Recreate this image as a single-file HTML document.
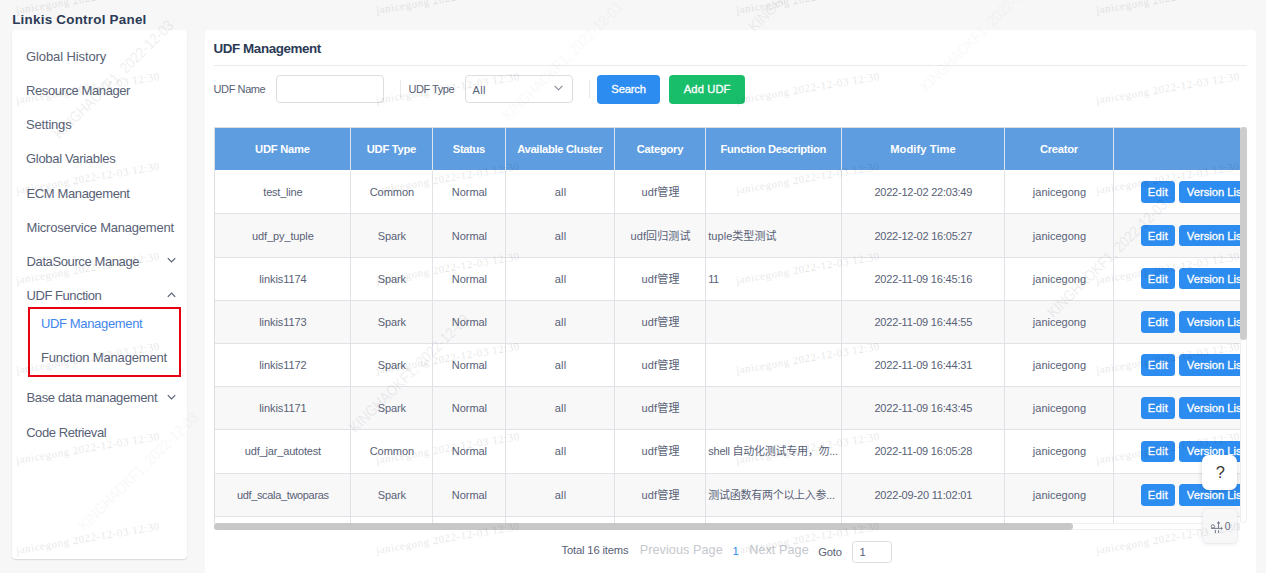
<!DOCTYPE html>
<html lang="en">
<head>
<meta charset="utf-8">
<title>Linkis Control Panel</title>
<style>
*{box-sizing:border-box;margin:0;padding:0}
html,body{width:1266px;height:573px;overflow:hidden}
body{background:#f7f7f7;font-family:"Liberation Sans","Noto Sans CJK SC",sans-serif;position:relative}
.b{position:absolute;display:block}
.t{position:absolute;white-space:nowrap}
.wm{position:absolute;white-space:nowrap;font-family:"Liberation Serif","Noto Serif CJK SC",serif;font-size:11px;letter-spacing:.57px;color:#000;opacity:.09;transform-origin:0 50%;transform:rotate(-9.6deg);line-height:16px;pointer-events:none}
.wm2{position:absolute;white-space:nowrap;font-size:15.4px;color:#000;transform-origin:0 50%;transform:rotate(-44.5deg) scaleX(.865);line-height:18px;pointer-events:none}
</style>
</head>
<body>
<div class="b" style="left:12px;top:30px;width:175px;height:529px;background:#fff;border-radius:4px;box-shadow:0 1px 1.5px rgba(0,0,0,.13)"></div>
<div class="b" style="left:205px;top:30px;width:1051px;height:560px;background:#fff;border-radius:4px"></div>
<div class="b" style="left:28px;top:307px;width:153px;height:70px;border:2px solid #e60012"></div>
<div class="b" style="left:214px;top:65px;width:1033px;height:1px;background:#e8eaec"></div>
<div class="b" style="left:276px;top:75px;width:108px;height:28px;background:#fff;border:1px solid #dcdee2;border-radius:4px"></div>
<div class="b" style="left:400px;top:80px;width:1px;height:18px;background:#e8eaec"></div>
<div class="b" style="left:465px;top:75px;width:108px;height:28px;background:#fff;border:1px solid #dcdee2;border-radius:4px"></div>
<div class="b" style="left:589px;top:80px;width:1px;height:18px;background:#e8eaec"></div>
<div class="b" style="left:597px;top:75px;width:63px;height:29px;background:#2d8cf0;border-radius:4px"></div>
<div class="b" style="left:669px;top:75px;width:76px;height:29px;background:#19be6b;border-radius:4px"></div>
<div class="b" style="left:214px;top:127px;width:1026px;height:1px;background:#dcdee2"></div>
<div class="b" style="left:214px;top:128px;width:1026px;height:42px;background:#5e9de0"></div>
<div class="b" style="left:214px;top:170px;width:1026px;height:43px;background:#fff"></div>
<div class="b" style="left:214px;top:213px;width:1026px;height:1px;background:#e1e2e8"></div>
<div class="b" style="left:214px;top:214px;width:1026px;height:43px;background:#f8f8f9"></div>
<div class="b" style="left:214px;top:257px;width:1026px;height:1px;background:#e1e2e8"></div>
<div class="b" style="left:214px;top:258px;width:1026px;height:42px;background:#fff"></div>
<div class="b" style="left:214px;top:300px;width:1026px;height:1px;background:#e1e2e8"></div>
<div class="b" style="left:214px;top:301px;width:1026px;height:42px;background:#f8f8f9"></div>
<div class="b" style="left:214px;top:343px;width:1026px;height:1px;background:#e1e2e8"></div>
<div class="b" style="left:214px;top:344px;width:1026px;height:42px;background:#fff"></div>
<div class="b" style="left:214px;top:386px;width:1026px;height:1px;background:#e1e2e8"></div>
<div class="b" style="left:214px;top:387px;width:1026px;height:42px;background:#f8f8f9"></div>
<div class="b" style="left:214px;top:429px;width:1026px;height:1px;background:#e1e2e8"></div>
<div class="b" style="left:214px;top:430px;width:1026px;height:43px;background:#fff"></div>
<div class="b" style="left:214px;top:473px;width:1026px;height:1px;background:#e1e2e8"></div>
<div class="b" style="left:214px;top:474px;width:1026px;height:42px;background:#f8f8f9"></div>
<div class="b" style="left:214px;top:516px;width:1026px;height:1px;background:#e1e2e8"></div>
<div class="b" style="left:214px;top:517px;width:1026px;height:6px;background:#fff"></div>
<div class="b" style="left:214px;top:128px;width:1px;height:395px;background:#dcdee2"></div>
<div class="b" style="left:350px;top:128px;width:1px;height:42px;background:#dbe3f0"></div>
<div class="b" style="left:350px;top:170px;width:1px;height:353px;background:#e1e2e8"></div>
<div class="b" style="left:432px;top:128px;width:1px;height:42px;background:#dbe3f0"></div>
<div class="b" style="left:432px;top:170px;width:1px;height:353px;background:#e1e2e8"></div>
<div class="b" style="left:505px;top:128px;width:1px;height:42px;background:#dbe3f0"></div>
<div class="b" style="left:505px;top:170px;width:1px;height:353px;background:#e1e2e8"></div>
<div class="b" style="left:614px;top:128px;width:1px;height:42px;background:#dbe3f0"></div>
<div class="b" style="left:614px;top:170px;width:1px;height:353px;background:#e1e2e8"></div>
<div class="b" style="left:705px;top:128px;width:1px;height:42px;background:#dbe3f0"></div>
<div class="b" style="left:705px;top:170px;width:1px;height:353px;background:#e1e2e8"></div>
<div class="b" style="left:841px;top:128px;width:1px;height:42px;background:#dbe3f0"></div>
<div class="b" style="left:841px;top:170px;width:1px;height:353px;background:#e1e2e8"></div>
<div class="b" style="left:1004px;top:128px;width:1px;height:42px;background:#dbe3f0"></div>
<div class="b" style="left:1004px;top:170px;width:1px;height:353px;background:#e1e2e8"></div>
<div class="b" style="left:1113px;top:128px;width:1px;height:42px;background:#dbe3f0"></div>
<div class="b" style="left:1113px;top:170px;width:1px;height:353px;background:#e1e2e8"></div>
<div class="b" style="left:1141px;top:181px;width:34px;height:22px;background:#2d8cf0;border-radius:3.5px"></div>
<div class="b" style="left:1179px;top:181px;width:61px;height:22px;background:#2d8cf0;border-radius:3.5px 0 0 3.5px"></div>
<div class="b" style="left:1141px;top:225px;width:34px;height:21px;background:#2d8cf0;border-radius:3.5px"></div>
<div class="b" style="left:1179px;top:225px;width:61px;height:21px;background:#2d8cf0;border-radius:3.5px 0 0 3.5px"></div>
<div class="b" style="left:1141px;top:268px;width:34px;height:21px;background:#2d8cf0;border-radius:3.5px"></div>
<div class="b" style="left:1179px;top:268px;width:61px;height:21px;background:#2d8cf0;border-radius:3.5px 0 0 3.5px"></div>
<div class="b" style="left:1141px;top:311px;width:34px;height:22px;background:#2d8cf0;border-radius:3.5px"></div>
<div class="b" style="left:1179px;top:311px;width:61px;height:22px;background:#2d8cf0;border-radius:3.5px 0 0 3.5px"></div>
<div class="b" style="left:1141px;top:354px;width:34px;height:22px;background:#2d8cf0;border-radius:3.5px"></div>
<div class="b" style="left:1179px;top:354px;width:61px;height:22px;background:#2d8cf0;border-radius:3.5px 0 0 3.5px"></div>
<div class="b" style="left:1141px;top:397px;width:34px;height:22px;background:#2d8cf0;border-radius:3.5px"></div>
<div class="b" style="left:1179px;top:397px;width:61px;height:22px;background:#2d8cf0;border-radius:3.5px 0 0 3.5px"></div>
<div class="b" style="left:1141px;top:441px;width:34px;height:21px;background:#2d8cf0;border-radius:3.5px"></div>
<div class="b" style="left:1179px;top:441px;width:61px;height:21px;background:#2d8cf0;border-radius:3.5px 0 0 3.5px"></div>
<div class="b" style="left:1141px;top:484px;width:34px;height:22px;background:#2d8cf0;border-radius:3.5px"></div>
<div class="b" style="left:1179px;top:484px;width:61px;height:22px;background:#2d8cf0;border-radius:3.5px 0 0 3.5px"></div>
<div class="b" style="left:1240px;top:127px;width:7px;height:396px;background:#fff;border-radius:0 0 4px 4px;box-shadow:inset 0 0 0 1px #f0f0f0"></div>
<div class="b" style="left:1240px;top:127px;width:7px;height:213px;background:#cdcdcd;border-radius:3.5px"></div>
<div class="b" style="left:214px;top:523px;width:1026px;height:7px;background:#fff;box-shadow:inset 0 0 0 1px #f0f0f0"></div>
<div class="b" style="left:214px;top:523px;width:859px;height:7px;background:#c8c8c8;border-radius:3.5px"></div>
<div class="b" style="left:852px;top:541px;width:40px;height:22px;background:#fff;border:1px solid #dcdee2;border-radius:3.5px"></div>
<div class="b" style="left:1202.3px;top:454.5px;width:35.1px;height:35.2px;background:#fff;border-radius:6.5px;box-shadow:0 1px 5px rgba(0,0,0,.16)"></div>
<div class="b" style="left:1202.5px;top:508.7px;width:34.7px;height:34.5px;background:#f7f7f8;border-radius:4px;box-shadow:0 0 0 .6px #e4e9f0,0 1px 4px rgba(0,0,0,.10)"></div>

<svg class="b" style="left:167px;top:257px" width="9" height="7" viewBox="0 0 9 7"><path d="M0.8 1.2 L4.5 5 L8.2 1.2" fill="none" stroke="#596274" stroke-width="1.2"/></svg>
<svg class="b" style="left:167px;top:291px" width="9" height="7" viewBox="0 0 9 7"><path d="M0.8 5.8 L4.5 2 L8.2 5.8" fill="none" stroke="#596274" stroke-width="1.2"/></svg>
<svg class="b" style="left:167px;top:394px" width="9" height="7" viewBox="0 0 9 7"><path d="M0.8 1.2 L4.5 5 L8.2 1.2" fill="none" stroke="#596274" stroke-width="1.2"/></svg>
<svg class="b" style="left:553.5px;top:85px" width="9" height="6" viewBox="0 0 9 6"><path d="M0.6 0.8 L4.5 4.8 L8.4 0.8" fill="none" stroke="#808695" stroke-width="1.1"/></svg>
<svg class="b" style="left:1209px;top:519px" width="16" height="16" viewBox="0 0 16 16"><g fill="none" stroke="#6b7283" stroke-width="0.9"><circle cx="3.9" cy="7.4" r="1.7"/><path d="M2 9.4 H12.6"/><path d="M9.5 9.4 V4"/><path d="M6.4 11.1 V14 M9.5 11.1 V14"/></g><path d="M7.8 4.6 L9.5 1.9 L11.2 4.6 Z M12 8 L13.8 9.4 L12 10.8 Z" fill="#6b7283"/></svg>

<div class="t" style="left:12.15px;top:10.00px;line-height:19px;font-size:13.4px;color:#2b3a55;letter-spacing:0.249px;font-weight:bold">Linkis Control Panel</div>
<div class="t" style="left:26.05px;top:48.00px;line-height:18px;font-size:13px;color:#586176;letter-spacing:-0.111px">Global History</div>
<div class="t" style="left:26.05px;top:82.00px;line-height:18px;font-size:13px;color:#586176;letter-spacing:-0.411px">Resource Manager</div>
<div class="t" style="left:26.05px;top:116.00px;line-height:18px;font-size:13px;color:#586176;letter-spacing:-0.198px">Settings</div>
<div class="t" style="left:26.05px;top:150.00px;line-height:18px;font-size:13px;color:#586176;letter-spacing:-0.321px">Global Variables</div>
<div class="t" style="left:26.55px;top:185.00px;line-height:18px;font-size:13px;color:#586176;letter-spacing:-0.384px">ECM Management</div>
<div class="t" style="left:26.55px;top:219.00px;line-height:18px;font-size:13px;color:#586176;letter-spacing:-0.225px">Microservice Management</div>
<div class="t" style="left:26.55px;top:253.00px;line-height:18px;font-size:13px;color:#586176;letter-spacing:-0.391px">DataSource Manage</div>
<div class="t" style="left:26.55px;top:287.00px;line-height:18px;font-size:13px;color:#586176;letter-spacing:-0.446px">UDF Function</div>
<div class="t" style="left:40.95px;top:315.00px;line-height:18px;font-size:13px;color:#3f86ee;letter-spacing:-0.348px">UDF Management</div>
<div class="t" style="left:40.95px;top:349.00px;line-height:18px;font-size:13px;color:#586176;letter-spacing:-0.176px">Function Management</div>
<div class="t" style="left:26.55px;top:389.00px;line-height:18px;font-size:13px;color:#586176;letter-spacing:-0.371px">Base data management</div>
<div class="t" style="left:26.15px;top:424.00px;line-height:18px;font-size:13px;color:#586176;letter-spacing:-0.423px">Code Retrieval</div>
<div class="t" style="left:213.45px;top:39.00px;line-height:19px;font-size:13.4px;color:#2b3a55;letter-spacing:-0.400px;font-weight:bold">UDF Management</div>
<div class="t" style="left:213.55px;top:82.00px;line-height:15px;font-size:11px;color:#586176;letter-spacing:-0.402px">UDF Name</div>
<div class="t" style="left:408.45px;top:82.00px;line-height:15px;font-size:11px;color:#586176;letter-spacing:-0.459px">UDF Type</div>
<div class="t" style="left:472.45px;top:83.00px;line-height:15px;font-size:11px;color:#586176;letter-spacing:0.383px">All</div>
<div class="t" style="left:611.35px;top:81.00px;line-height:16px;font-size:11.2px;color:#fff;letter-spacing:-0.171px;-webkit-text-stroke:.3px #fff">Search</div>
<div class="t" style="left:683.75px;top:81.00px;line-height:16px;font-size:11.2px;color:#fff;letter-spacing:0.114px;-webkit-text-stroke:.3px #fff">Add UDF</div>
<div class="t" style="left:255.05px;top:141.00px;line-height:16px;font-size:11.2px;color:#fff;letter-spacing:-0.225px;font-weight:bold">UDF Name</div>
<div class="t" style="left:366.80px;top:141.00px;line-height:16px;font-size:11.2px;color:#fff;letter-spacing:-0.284px;font-weight:bold">UDF Type</div>
<div class="t" style="left:452.80px;top:141.00px;line-height:16px;font-size:11.2px;color:#fff;letter-spacing:-0.361px;font-weight:bold">Status</div>
<div class="t" style="left:517.15px;top:141.00px;line-height:16px;font-size:11.2px;color:#fff;letter-spacing:-0.292px;font-weight:bold">Available Cluster</div>
<div class="t" style="left:636.65px;top:141.00px;line-height:16px;font-size:11.2px;color:#fff;letter-spacing:-0.243px;font-weight:bold">Category</div>
<div class="t" style="left:720.60px;top:141.00px;line-height:16px;font-size:11.2px;color:#fff;letter-spacing:-0.320px;font-weight:bold">Function Description</div>
<div class="t" style="left:890.25px;top:141.00px;line-height:16px;font-size:11.2px;color:#fff;letter-spacing:0.044px;font-weight:bold">Modify Time</div>
<div class="t" style="left:1039.90px;top:141.00px;line-height:16px;font-size:11.2px;color:#fff;letter-spacing:-0.249px;font-weight:bold">Creator</div>
<div class="t" style="left:263.30px;top:185.00px;line-height:15px;font-size:11px;color:#586176;letter-spacing:-0.211px">test_line</div>
<div class="t" style="left:369.65px;top:185.00px;line-height:15px;font-size:11px;color:#586176;letter-spacing:-0.025px">Common</div>
<div class="t" style="left:451.75px;top:185.00px;line-height:15px;font-size:11px;color:#586176;letter-spacing:-0.031px">Normal</div>
<div class="t" style="left:554.70px;top:185.00px;line-height:15px;font-size:11px;color:#586176;letter-spacing:0.192px">all</div>
<div class="t" style="left:641.50px;top:185.00px;line-height:15px;font-size:11px;color:#586176;letter-spacing:0.151px">udf管理</div>
<div class="t" style="left:874.45px;top:185.00px;line-height:15px;font-size:11px;color:#586176;letter-spacing:-0.236px">2022-12-02 22:03:49</div>
<div class="t" style="left:1032.80px;top:185.00px;line-height:15px;font-size:11px;color:#586176;letter-spacing:0.009px">janicegong</div>
<div class="t" style="left:1147.75px;top:184.00px;line-height:16px;font-size:11.2px;color:#fff;letter-spacing:0.240px;-webkit-text-stroke:.3px #fff">Edit</div>
<div class="t" style="left:1186.85px;top:184.00px;line-height:16px;font-size:11.2px;color:#fff;letter-spacing:0.005px;width:53.15px;overflow:hidden;-webkit-text-stroke:.3px #fff">Version List</div>
<div class="t" style="left:252.10px;top:229.00px;line-height:15px;font-size:11px;color:#586176;letter-spacing:-0.118px">udf_py_tuple</div>
<div class="t" style="left:377.85px;top:229.00px;line-height:15px;font-size:11px;color:#586176;letter-spacing:-0.163px">Spark</div>
<div class="t" style="left:451.75px;top:229.00px;line-height:15px;font-size:11px;color:#586176;letter-spacing:-0.031px">Normal</div>
<div class="t" style="left:554.70px;top:229.00px;line-height:15px;font-size:11px;color:#586176;letter-spacing:0.192px">all</div>
<div class="t" style="left:630.40px;top:229.00px;line-height:15px;font-size:11px;color:#586176;letter-spacing:0.134px">udf回归测试</div>
<div class="t" style="left:708.25px;top:229.00px;line-height:15px;font-size:11px;color:#586176;letter-spacing:0.043px">tuple类型测试</div>
<div class="t" style="left:874.45px;top:229.00px;line-height:15px;font-size:11px;color:#586176;letter-spacing:-0.236px">2022-12-02 16:05:27</div>
<div class="t" style="left:1032.80px;top:229.00px;line-height:15px;font-size:11px;color:#586176;letter-spacing:0.009px">janicegong</div>
<div class="t" style="left:1147.75px;top:228.00px;line-height:16px;font-size:11.2px;color:#fff;letter-spacing:0.240px;-webkit-text-stroke:.3px #fff">Edit</div>
<div class="t" style="left:1186.85px;top:228.00px;line-height:16px;font-size:11.2px;color:#fff;letter-spacing:0.005px;width:53.15px;overflow:hidden;-webkit-text-stroke:.3px #fff">Version List</div>
<div class="t" style="left:259.15px;top:272.00px;line-height:15px;font-size:11px;color:#586176;letter-spacing:-0.057px">linkis1174</div>
<div class="t" style="left:377.85px;top:272.00px;line-height:15px;font-size:11px;color:#586176;letter-spacing:-0.163px">Spark</div>
<div class="t" style="left:451.75px;top:272.00px;line-height:15px;font-size:11px;color:#586176;letter-spacing:-0.031px">Normal</div>
<div class="t" style="left:554.70px;top:272.00px;line-height:15px;font-size:11px;color:#586176;letter-spacing:0.192px">all</div>
<div class="t" style="left:641.50px;top:272.00px;line-height:15px;font-size:11px;color:#586176;letter-spacing:0.151px">udf管理</div>
<div class="t" style="left:708.25px;top:272.00px;line-height:15px;font-size:11px;color:#586176;letter-spacing:-0.522px">11</div>
<div class="t" style="left:874.45px;top:272.00px;line-height:15px;font-size:11px;color:#586176;letter-spacing:-0.190px">2022-11-09 16:45:16</div>
<div class="t" style="left:1032.80px;top:272.00px;line-height:15px;font-size:11px;color:#586176;letter-spacing:0.009px">janicegong</div>
<div class="t" style="left:1147.75px;top:271.00px;line-height:16px;font-size:11.2px;color:#fff;letter-spacing:0.240px;-webkit-text-stroke:.3px #fff">Edit</div>
<div class="t" style="left:1186.85px;top:271.00px;line-height:16px;font-size:11.2px;color:#fff;letter-spacing:0.005px;width:53.15px;overflow:hidden;-webkit-text-stroke:.3px #fff">Version List</div>
<div class="t" style="left:259.15px;top:315.00px;line-height:15px;font-size:11px;color:#586176;letter-spacing:-0.057px">linkis1173</div>
<div class="t" style="left:377.85px;top:315.00px;line-height:15px;font-size:11px;color:#586176;letter-spacing:-0.163px">Spark</div>
<div class="t" style="left:451.75px;top:315.00px;line-height:15px;font-size:11px;color:#586176;letter-spacing:-0.031px">Normal</div>
<div class="t" style="left:554.70px;top:315.00px;line-height:15px;font-size:11px;color:#586176;letter-spacing:0.192px">all</div>
<div class="t" style="left:641.50px;top:315.00px;line-height:15px;font-size:11px;color:#586176;letter-spacing:0.151px">udf管理</div>
<div class="t" style="left:874.45px;top:315.00px;line-height:15px;font-size:11px;color:#586176;letter-spacing:-0.190px">2022-11-09 16:44:55</div>
<div class="t" style="left:1032.80px;top:315.00px;line-height:15px;font-size:11px;color:#586176;letter-spacing:0.009px">janicegong</div>
<div class="t" style="left:1147.75px;top:314.00px;line-height:16px;font-size:11.2px;color:#fff;letter-spacing:0.240px;-webkit-text-stroke:.3px #fff">Edit</div>
<div class="t" style="left:1186.85px;top:314.00px;line-height:16px;font-size:11.2px;color:#fff;letter-spacing:0.005px;width:53.15px;overflow:hidden;-webkit-text-stroke:.3px #fff">Version List</div>
<div class="t" style="left:259.15px;top:358.00px;line-height:15px;font-size:11px;color:#586176;letter-spacing:-0.057px">linkis1172</div>
<div class="t" style="left:377.85px;top:358.00px;line-height:15px;font-size:11px;color:#586176;letter-spacing:-0.163px">Spark</div>
<div class="t" style="left:451.75px;top:358.00px;line-height:15px;font-size:11px;color:#586176;letter-spacing:-0.031px">Normal</div>
<div class="t" style="left:554.70px;top:358.00px;line-height:15px;font-size:11px;color:#586176;letter-spacing:0.192px">all</div>
<div class="t" style="left:641.50px;top:358.00px;line-height:15px;font-size:11px;color:#586176;letter-spacing:0.151px">udf管理</div>
<div class="t" style="left:874.45px;top:358.00px;line-height:15px;font-size:11px;color:#586176;letter-spacing:-0.190px">2022-11-09 16:44:31</div>
<div class="t" style="left:1032.80px;top:358.00px;line-height:15px;font-size:11px;color:#586176;letter-spacing:0.009px">janicegong</div>
<div class="t" style="left:1147.75px;top:357.00px;line-height:16px;font-size:11.2px;color:#fff;letter-spacing:0.240px;-webkit-text-stroke:.3px #fff">Edit</div>
<div class="t" style="left:1186.85px;top:357.00px;line-height:16px;font-size:11.2px;color:#fff;letter-spacing:0.005px;width:53.15px;overflow:hidden;-webkit-text-stroke:.3px #fff">Version List</div>
<div class="t" style="left:259.15px;top:401.00px;line-height:15px;font-size:11px;color:#586176;letter-spacing:-0.057px">linkis1171</div>
<div class="t" style="left:377.85px;top:401.00px;line-height:15px;font-size:11px;color:#586176;letter-spacing:-0.163px">Spark</div>
<div class="t" style="left:451.75px;top:401.00px;line-height:15px;font-size:11px;color:#586176;letter-spacing:-0.031px">Normal</div>
<div class="t" style="left:554.70px;top:401.00px;line-height:15px;font-size:11px;color:#586176;letter-spacing:0.192px">all</div>
<div class="t" style="left:641.50px;top:401.00px;line-height:15px;font-size:11px;color:#586176;letter-spacing:0.151px">udf管理</div>
<div class="t" style="left:874.45px;top:401.00px;line-height:15px;font-size:11px;color:#586176;letter-spacing:-0.190px">2022-11-09 16:43:45</div>
<div class="t" style="left:1032.80px;top:401.00px;line-height:15px;font-size:11px;color:#586176;letter-spacing:0.009px">janicegong</div>
<div class="t" style="left:1147.75px;top:400.00px;line-height:16px;font-size:11.2px;color:#fff;letter-spacing:0.240px;-webkit-text-stroke:.3px #fff">Edit</div>
<div class="t" style="left:1186.85px;top:400.00px;line-height:16px;font-size:11.2px;color:#fff;letter-spacing:0.005px;width:53.15px;overflow:hidden;-webkit-text-stroke:.3px #fff">Version List</div>
<div class="t" style="left:244.75px;top:444.00px;line-height:15px;font-size:11px;color:#586176;letter-spacing:-0.166px">udf_jar_autotest</div>
<div class="t" style="left:369.65px;top:444.00px;line-height:15px;font-size:11px;color:#586176;letter-spacing:-0.025px">Common</div>
<div class="t" style="left:451.75px;top:444.00px;line-height:15px;font-size:11px;color:#586176;letter-spacing:-0.031px">Normal</div>
<div class="t" style="left:554.70px;top:444.00px;line-height:15px;font-size:11px;color:#586176;letter-spacing:0.192px">all</div>
<div class="t" style="left:641.50px;top:444.00px;line-height:15px;font-size:11px;color:#586176;letter-spacing:0.151px">udf管理</div>
<div class="t" style="left:708.25px;top:444.00px;line-height:15px;font-size:11px;color:#586176;letter-spacing:-0.245px">shell 自动化测试专用，勿...</div>
<div class="t" style="left:874.45px;top:444.00px;line-height:15px;font-size:11px;color:#586176;letter-spacing:-0.190px">2022-11-09 16:05:28</div>
<div class="t" style="left:1032.80px;top:444.00px;line-height:15px;font-size:11px;color:#586176;letter-spacing:0.009px">janicegong</div>
<div class="t" style="left:1147.75px;top:443.00px;line-height:16px;font-size:11.2px;color:#fff;letter-spacing:0.240px;-webkit-text-stroke:.3px #fff">Edit</div>
<div class="t" style="left:1186.85px;top:443.00px;line-height:16px;font-size:11.2px;color:#fff;letter-spacing:0.005px;width:53.15px;overflow:hidden;-webkit-text-stroke:.3px #fff">Version List</div>
<div class="t" style="left:236.90px;top:488.00px;line-height:15px;font-size:11px;color:#586176;letter-spacing:-0.338px">udf_scala_twoparas</div>
<div class="t" style="left:377.85px;top:488.00px;line-height:15px;font-size:11px;color:#586176;letter-spacing:-0.163px">Spark</div>
<div class="t" style="left:451.75px;top:488.00px;line-height:15px;font-size:11px;color:#586176;letter-spacing:-0.031px">Normal</div>
<div class="t" style="left:554.70px;top:488.00px;line-height:15px;font-size:11px;color:#586176;letter-spacing:0.192px">all</div>
<div class="t" style="left:641.50px;top:488.00px;line-height:15px;font-size:11px;color:#586176;letter-spacing:0.151px">udf管理</div>
<div class="t" style="left:708.25px;top:488.00px;line-height:15px;font-size:11px;color:#586176;letter-spacing:-0.267px">测试函数有两个以上入参...</div>
<div class="t" style="left:874.45px;top:488.00px;line-height:15px;font-size:11px;color:#586176;letter-spacing:-0.190px">2022-09-20 11:02:01</div>
<div class="t" style="left:1032.80px;top:488.00px;line-height:15px;font-size:11px;color:#586176;letter-spacing:0.009px">janicegong</div>
<div class="t" style="left:1147.75px;top:487.00px;line-height:16px;font-size:11.2px;color:#fff;letter-spacing:0.240px;-webkit-text-stroke:.3px #fff">Edit</div>
<div class="t" style="left:1186.85px;top:487.00px;line-height:16px;font-size:11.2px;color:#fff;letter-spacing:0.005px;width:53.15px;overflow:hidden;-webkit-text-stroke:.3px #fff">Version List</div>
<div class="t" style="left:561.55px;top:542.00px;line-height:16px;font-size:11.2px;color:#586176;letter-spacing:-0.156px">Total 16 items</div>
<div class="t" style="left:639.65px;top:541.00px;line-height:18px;font-size:12.6px;color:#c5c8ce;letter-spacing:0.090px">Previous Page</div>
<div class="t" style="left:732.40px;top:543.00px;line-height:16px;font-size:11.2px;color:#2d8cf0;letter-spacing:-0.934px">1</div>
<div class="t" style="left:749.25px;top:541.00px;line-height:18px;font-size:12.6px;color:#c5c8ce;letter-spacing:0.073px">Next Page</div>
<div class="t" style="left:818.15px;top:544.00px;line-height:16px;font-size:11.2px;color:#586176;letter-spacing:-0.122px">Goto</div>
<div class="t" style="left:859.40px;top:544.00px;line-height:16px;font-size:11.2px;color:#586176;letter-spacing:-0.734px">1</div>
<div class="t" style="left:1215.65px;top:461.00px;line-height:23px;font-size:16.5px;color:#3a3a3a;letter-spacing:0.000px">?</div>
<div class="t" style="left:1224.70px;top:520.00px;line-height:14px;font-size:10.2px;color:#5d6577;letter-spacing:0.000px">0</div>
<div class="wm" style="left:16.3px;top:2.2px">janicegong 2022-12-03 12:30</div>
<div class="wm" style="left:376.3px;top:2.2px">janicegong 2022-12-03 12:30</div>
<div class="wm" style="left:736.3px;top:2.2px">janicegong 2022-12-03 12:30</div>
<div class="wm" style="left:1096.3px;top:2.2px">janicegong 2022-12-03 12:30</div>
<div class="wm" style="left:16.3px;top:92.2px">janicegong 2022-12-03 12:30</div>
<div class="wm" style="left:376.3px;top:92.2px">janicegong 2022-12-03 12:30</div>
<div class="wm" style="left:736.3px;top:92.2px">janicegong 2022-12-03 12:30</div>
<div class="wm" style="left:1096.3px;top:92.2px">janicegong 2022-12-03 12:30</div>
<div class="wm" style="left:16.3px;top:182.2px">janicegong 2022-12-03 12:30</div>
<div class="wm" style="left:376.3px;top:182.2px">janicegong 2022-12-03 12:30</div>
<div class="wm" style="left:736.3px;top:182.2px">janicegong 2022-12-03 12:30</div>
<div class="wm" style="left:1096.3px;top:182.2px">janicegong 2022-12-03 12:30</div>
<div class="wm" style="left:16.3px;top:272.2px">janicegong 2022-12-03 12:30</div>
<div class="wm" style="left:376.3px;top:272.2px">janicegong 2022-12-03 12:30</div>
<div class="wm" style="left:736.3px;top:272.2px">janicegong 2022-12-03 12:30</div>
<div class="wm" style="left:1096.3px;top:272.2px">janicegong 2022-12-03 12:30</div>
<div class="wm" style="left:16.3px;top:362.2px">janicegong 2022-12-03 12:30</div>
<div class="wm" style="left:376.3px;top:362.2px">janicegong 2022-12-03 12:30</div>
<div class="wm" style="left:736.3px;top:362.2px">janicegong 2022-12-03 12:30</div>
<div class="wm" style="left:1096.3px;top:362.2px">janicegong 2022-12-03 12:30</div>
<div class="wm" style="left:16.3px;top:452.2px">janicegong 2022-12-03 12:30</div>
<div class="wm" style="left:376.3px;top:452.2px">janicegong 2022-12-03 12:30</div>
<div class="wm" style="left:736.3px;top:452.2px">janicegong 2022-12-03 12:30</div>
<div class="wm" style="left:1096.3px;top:452.2px">janicegong 2022-12-03 12:30</div>
<div class="wm" style="left:16.3px;top:542.2px">janicegong 2022-12-03 12:30</div>
<div class="wm" style="left:376.3px;top:542.2px">janicegong 2022-12-03 12:30</div>
<div class="wm" style="left:736.3px;top:542.2px">janicegong 2022-12-03 12:30</div>
<div class="wm" style="left:1096.3px;top:542.2px">janicegong 2022-12-03 12:30</div>
<div class="wm" style="left:16.3px;top:632.2px">janicegong 2022-12-03 12:30</div>
<div class="wm" style="left:376.3px;top:632.2px">janicegong 2022-12-03 12:30</div>
<div class="wm" style="left:736.3px;top:632.2px">janicegong 2022-12-03 12:30</div>
<div class="wm" style="left:1096.3px;top:632.2px">janicegong 2022-12-03 12:30</div>
<div class="wm2" style="left:55.7px;top:126.7px;opacity:0.06">KINGHAOKF1, 2022-12-03</div>
<div class="wm2" style="left:352.3px;top:420.6px;opacity:0.06">KINGHAOKF1, 2022-12-03</div>
<div class="wm2" style="left:1049.7px;top:305.9px;opacity:0.06">KINGHAOKF1, 2022-12-03</div>
<div class="wm2" style="left:751px;top:20.0px;opacity:0.05">KINGHAOKF1, 2022-12-03</div>
<div class="wm2" style="left:923px;top:80.0px;opacity:0.018">KINGHAOKF1, 2022-12-03</div>
<div class="wm2" style="left:505px;top:109.0px;opacity:0.018">KINGHAOKF1, 2022-12-03</div>
<div class="wm2" style="left:81px;top:519.0px;opacity:0.025">KINGHAOKF1, 2022-12-03</div>
</body>
</html>
